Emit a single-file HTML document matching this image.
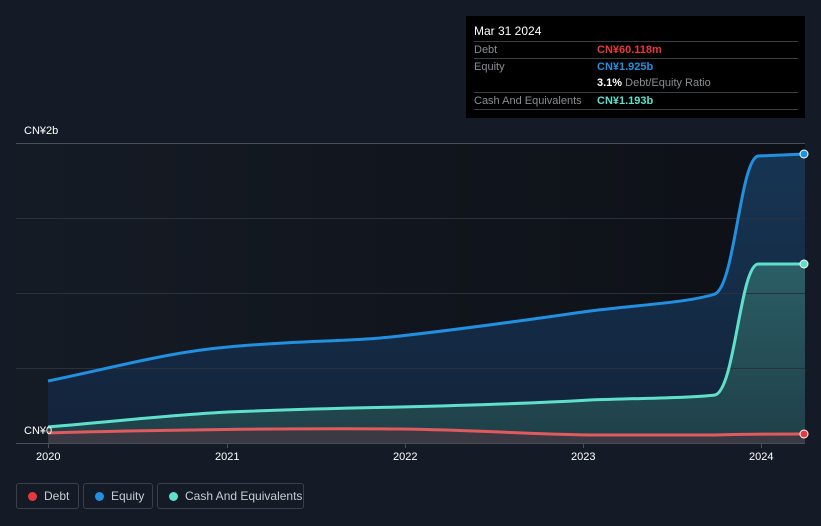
<!DOCTYPE html>
<html><head><meta charset="utf-8"><style>
html,body{margin:0;padding:0;width:821px;height:526px;overflow:hidden;background:#151b26;font-family:"Liberation Sans","Noto Sans CJK SC",sans-serif;}
.tt{position:absolute;left:466px;top:16px;width:339px;height:102px;background:#000;}
.tt .h{position:absolute;left:8px;top:8px;color:#fff;font-size:12px;}
.row{position:absolute;left:8px;width:324px;border-top:1px solid #3a3d42;height:16px;font-size:11px;color:#8a8d92;}
.row span{position:absolute;top:2px;}
.leg{position:absolute;top:483px;height:26px;border:1px solid #3a404a;border-radius:3px;color:#c8cbd0;font-size:12px;box-sizing:border-box;}
.leg i{position:absolute;left:11px;top:8px;width:9px;height:9px;border-radius:50%;}
.leg b{position:absolute;left:27px;top:5px;font-weight:normal;}
.ax{position:absolute;color:#fff;font-size:11px;}
</style></head><body>
<svg width="821" height="526" style="position:absolute;left:0;top:0">
<defs>
<linearGradient id="bg" x1="0" x2="1" y1="0" y2="0"><stop offset="0" stop-color="#151b25"/><stop offset="1" stop-color="#0d1016"/></linearGradient>
<linearGradient id="eq" x1="0" x2="0" y1="0" y2="1"><stop offset="0" stop-color="#163553"/><stop offset="1" stop-color="#13233a"/></linearGradient>
<linearGradient id="cs" x1="0" x2="0" y1="0" y2="1"><stop offset="0" stop-color="#2b5e66"/><stop offset="1" stop-color="#1f3f48"/></linearGradient>
</defs>
<rect x="16" y="143" width="789" height="300" fill="url(#bg)"/>
<path d="M48,381 C120,366 170,352 228,347 C300,340 350,342 400,336 C480,327 540,318 590,311 C650,304 690,302 715,294 C735,285 740,160 758,156 L805,154 L805,443 L48,443Z" fill="url(#eq)"/>
<path d="M48,427 C120,421 170,415 228,412 C300,409 350,408 400,407 C480,405 540,403 590,400 C650,398 690,398 715,395 C735,390 740,266 758,264 L805,264 L805,443 L48,443Z" fill="url(#cs)"/>
<path d="M48,433 C150,430 300,428 400,429 C480,430 520,434 590,435 L715,435 C740,434 760,434 805,434 L805,443 L48,443Z" fill="#3b3a44"/>
<g stroke="#2b313b" stroke-width="1">
<line x1="16" y1="218.5" x2="805" y2="218.5"/><line x1="16" y1="293.5" x2="805" y2="293.5"/><line x1="16" y1="368.5" x2="805" y2="368.5"/>
</g>
<line x1="16" y1="143.5" x2="805" y2="143.5" stroke="#4a4f57"/>
<line x1="16" y1="443.5" x2="805" y2="443.5" stroke="#4a4f57"/>
<g stroke="#4a4f57"><line x1="48.5" y1="443" x2="48.5" y2="448"/><line x1="227.5" y1="443" x2="227.5" y2="448"/><line x1="405.5" y1="443" x2="405.5" y2="448"/><line x1="583.5" y1="443" x2="583.5" y2="448"/><line x1="761.5" y1="443" x2="761.5" y2="448"/></g>
<path d="M48,381 C120,366 170,352 228,347 C300,340 350,342 400,336 C480,327 540,318 590,311 C650,304 690,302 715,294 C735,285 740,160 758,156 L805,154" fill="none" stroke="#2190e0" stroke-width="3"/>
<path d="M48,427 C120,421 170,415 228,412 C300,409 350,408 400,407 C480,405 540,403 590,400 C650,398 690,398 715,395 C735,390 740,266 758,264 L805,264" fill="none" stroke="#5fe0cc" stroke-width="3"/>
<path d="M48,433 C150,430 300,428 400,429 C480,430 520,434 590,435 L715,435 C740,434 760,434 805,434" fill="none" stroke="#e05a5e" stroke-width="3"/>
<circle cx="804" cy="154" r="4" fill="#2190e0" stroke="#fff" stroke-width="1"/>
<circle cx="804" cy="264" r="4" fill="#5fe0cc" stroke="#fff" stroke-width="1"/>
<circle cx="804" cy="434" r="4" fill="#e8383d" stroke="#fff" stroke-width="1"/>
</svg>
<div class="ax" style="left:24px;top:125px">CN¥2b</div>
<div class="ax" style="left:24px;top:425px">CN¥0</div>
<div class="ax" style="left:36px;top:451px">2020</div>
<div class="ax" style="left:215px;top:451px">2021</div>
<div class="ax" style="left:393px;top:451px">2022</div>
<div class="ax" style="left:571px;top:451px">2023</div>
<div class="ax" style="left:749px;top:451px">2024</div>
<div class="tt">
<div class="h">Mar 31 2024</div>
<div class="row" style="top:25px"><span>Debt</span><span style="left:123px;color:#e8383d;font-weight:bold">CN¥60.118m</span></div>
<div class="row" style="top:42px"><span>Equity</span><span style="left:123px;color:#2190e0;font-weight:bold">CN¥1.925b</span></div>
<div class="row" style="top:59px;border-top:none"><span style="left:123px;color:#8a8d92"><b style="color:#fff">3.1%</b> Debt/Equity Ratio</span></div>
<div class="row" style="top:76px"><span>Cash And Equivalents</span><span style="left:123px;color:#5fe0cc;font-weight:bold">CN¥1.193b</span></div>
<div class="row" style="top:93px;height:0"></div>
</div>
<div class="leg" style="left:16px;width:63px"><i style="background:#e8383d"></i><b>Debt</b></div>
<div class="leg" style="left:83px;width:70px"><i style="background:#2190e0"></i><b>Equity</b></div>
<div class="leg" style="left:157px;width:147px"><i style="background:#5fe0cc"></i><b>Cash And Equivalents</b></div>
</body></html>
